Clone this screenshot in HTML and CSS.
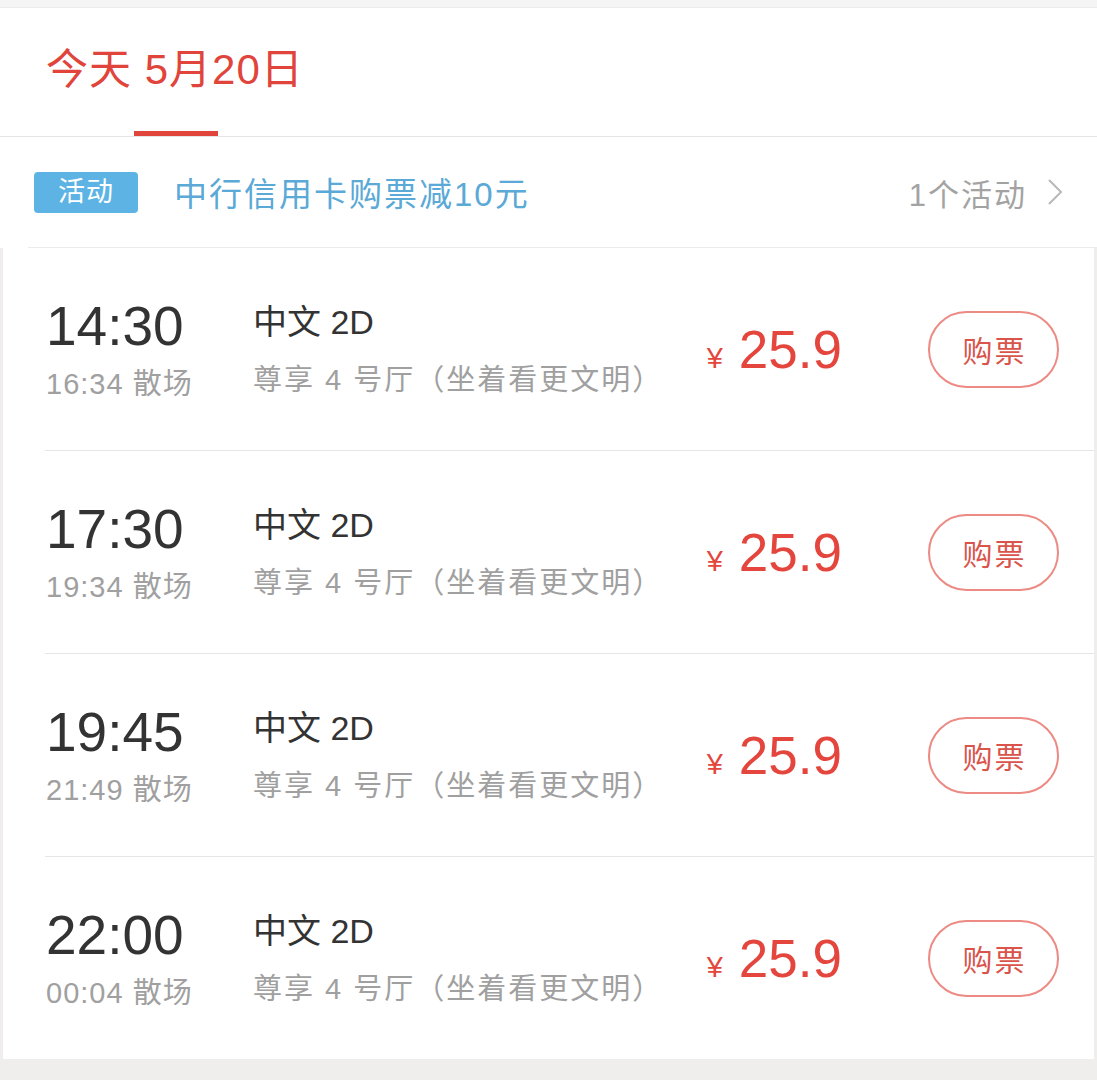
FILE: index.html
```html
<!DOCTYPE html>
<html lang="zh-CN">
<head>
    <meta charset="UTF-8">
    <meta name="viewport" content="width=device-width, initial-scale=1.0">
    <title>选择场次</title>
    <link rel="stylesheet" href="styles.css">
</head>
<body>
    <div class="top-strip"></div>

    <div class="tabs">
        <div class="tab tab-active">
            <span class="tab-text">今天 5月20日</span>
            <span class="tab-line"></span>
        </div>
    </div>

    <div class="promo">
        <div class="promo-inner">
            <span class="promo-tag">活动</span>
            <span class="promo-text">中行信用卡购票减10元</span>
            <span class="promo-count">1个活动</span>
            <svg class="promo-arrow" width="16" height="28" viewBox="0 0 16 28">
                <polyline points="2,2 14,14 2,26" fill="none" stroke="#b8b8b8" stroke-width="2"/>
            </svg>
        </div>
    </div>

    <div class="show-list">
        <div class="show-row">
            <div class="time-col">
                <div class="start-time">14:30</div>
                <div class="end-time">16:34 散场</div>
            </div>
            <div class="info-col">
                <div class="lang">中文 2D</div>
                <div class="hall">尊享 4 号厅（坐着看更文明）</div>
            </div>
            <div class="price"><span class="yen">¥</span>25.9</div>
            <button class="buy-btn">购票</button>
        </div>
        <div class="show-row">
            <div class="time-col">
                <div class="start-time">17:30</div>
                <div class="end-time">19:34 散场</div>
            </div>
            <div class="info-col">
                <div class="lang">中文 2D</div>
                <div class="hall">尊享 4 号厅（坐着看更文明）</div>
            </div>
            <div class="price"><span class="yen">¥</span>25.9</div>
            <button class="buy-btn">购票</button>
        </div>
        <div class="show-row">
            <div class="time-col">
                <div class="start-time">19:45</div>
                <div class="end-time">21:49 散场</div>
            </div>
            <div class="info-col">
                <div class="lang">中文 2D</div>
                <div class="hall">尊享 4 号厅（坐着看更文明）</div>
            </div>
            <div class="price"><span class="yen">¥</span>25.9</div>
            <button class="buy-btn">购票</button>
        </div>
        <div class="show-row">
            <div class="time-col">
                <div class="start-time">22:00</div>
                <div class="end-time">00:04 散场</div>
            </div>
            <div class="info-col">
                <div class="lang">中文 2D</div>
                <div class="hall">尊享 4 号厅（坐着看更文明）</div>
            </div>
            <div class="price"><span class="yen">¥</span>25.9</div>
            <button class="buy-btn">购票</button>
        </div>
    </div>
</body>
</html>
```
FILE: styles.css
```css
body {
    margin: 0;
    background-color: #efeeec;
    font-family: "Liberation Sans", "Noto Sans CJK SC", sans-serif;
}
.top-strip {
    height: 7px;
    background-color: #f5f5f5;
    border-bottom: 1px solid #ebebeb;
}
.tabs {
    height: 128px;
    background-color: #fff;
    border-bottom: 1px solid #e4e4e4;
    padding-left: 46px;
}
.tab {
    display: inline-flex;
    flex-direction: column;
    align-items: center;
    height: 128px;
    box-sizing: border-box;
    padding-top: 38px;
}
.tab-text {
    font-size: 42px;
    line-height: 48px;
    letter-spacing: 1px;
    color: #e0443b;
}
.tab-line {
    margin-top: auto;
    margin-left: 2px;
    width: 84px;
    height: 5px;
    background-color: #e0443b;
}
.promo {
    background-color: #fff;
    padding-left: 28px;
}
.promo-inner {
    display: flex;
    align-items: center;
    height: 110px;
    padding-left: 6px;
    padding-right: 34px;
    border-bottom: 1px solid #ececec;
}
.promo-tag {
    width: 104px;
    height: 41px;
    line-height: 41px;
    text-align: center;
    background-color: #5db4e4;
    border-radius: 4px;
    color: #fff;
    font-size: 27px;
    letter-spacing: 1px;
}
.promo-text {
    margin-left: 36px;
    flex: 1;
    font-size: 33px;
    letter-spacing: 2px;
    color: #5aa9d6;
}
.promo-count {
    font-size: 31px;
    letter-spacing: 2px;
    color: #a3a3a3;
}
.promo-arrow {
    margin-left: 20px;
}
.show-list {
    margin: 0 3px;
    background-color: #fff;
}
.show-row {
    display: flex;
    align-items: center;
    height: 202px;
    margin-left: 42px;
    padding-left: 1px;
    padding-right: 35px;
    border-bottom: 1px solid #e6e6e6;
}
.show-row:last-child {
    border-bottom: none;
}
.time-col {
    width: 207px;
}
.start-time {
    font-size: 55px;
    line-height: 58px;
    color: #333;
}
.end-time {
    margin-top: 12px;
    font-size: 29px;
    line-height: 34px;
    letter-spacing: 1px;
    color: #a0a0a0;
}
.info-col {
    flex: 1;
}
.lang {
    font-size: 34px;
    line-height: 40px;
    color: #333;
}
.hall {
    margin-top: 21px;
    font-size: 29px;
    line-height: 34px;
    letter-spacing: 2px;
    color: #a0a0a0;
}
.price {
    font-size: 53px;
    color: #e4463d;
}
.yen {
    font-size: 29px;
    margin-right: 16px;
}
.buy-btn {
    margin-left: 86px;
    width: 131px;
    height: 77px;
    border: 2px solid #ec8a83;
    border-radius: 39px;
    background-color: #fff;
    color: #d9544b;
    font-family: inherit;
    font-size: 30px;
    letter-spacing: 2px;
    padding: 0 0 0 2px;
}
```
